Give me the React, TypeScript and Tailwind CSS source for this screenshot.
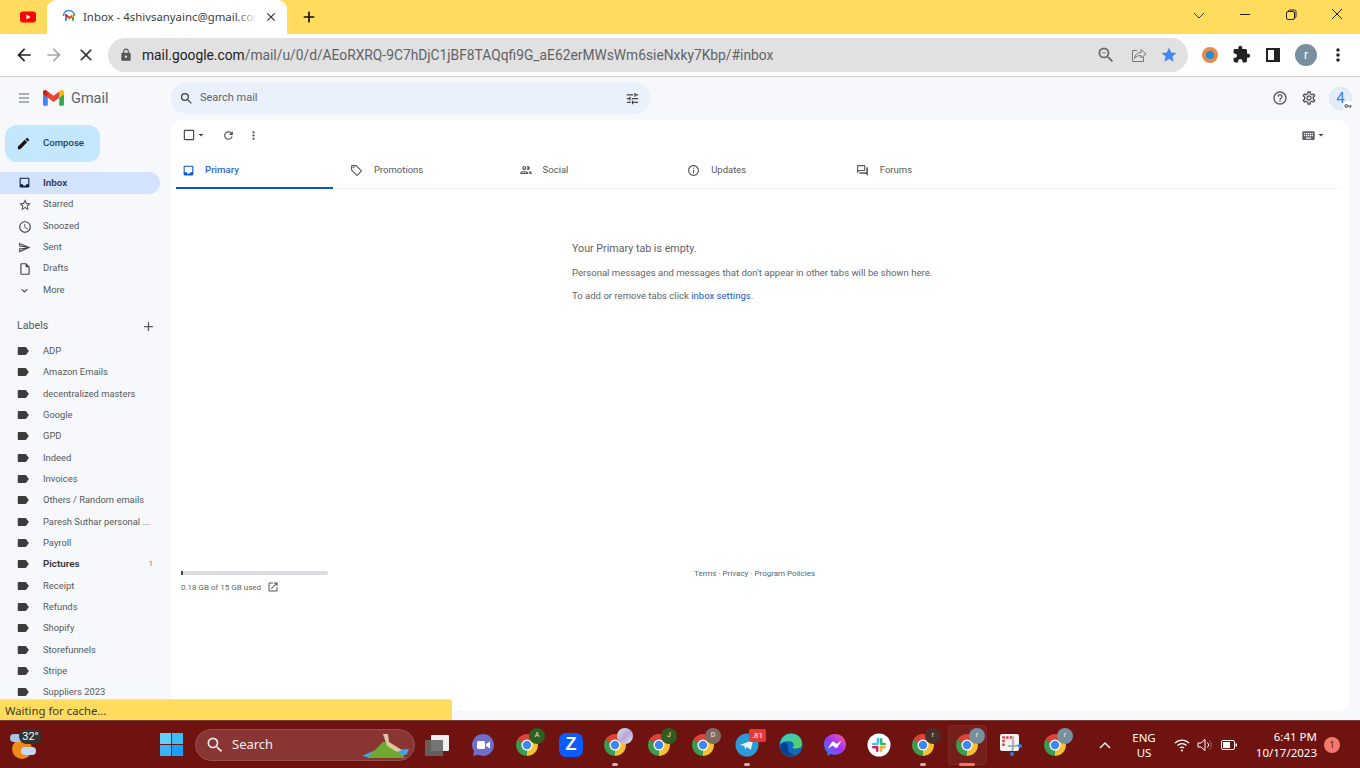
import { Menu, Plus } from "lucide-react";
import {
  MdAdd,
  MdArrowBack,
  MdArrowDropDown,
  MdArrowForward,
  MdClose,
  MdExpandMore,
  MdExtension,
  MdHelpOutline,
  MdInbox,
  MdInfoOutline,
  MdKeyboard,
  MdLabel,
  MdLock,
  MdMoreVert,
  MdOpenInNew,
  MdOutlineCheckBoxOutlineBlank,
  MdOutlineForum,
  MdOutlineInsertDriveFile,
  MdOutlineLocalOffer,
  MdOutlinePeople,
  MdOutlineSend,
  MdOutlineSettings,
  MdOutlineTune,
  MdAccessTime,
  MdRefresh,
  MdSearch,
  MdStar,
  MdStarBorder,
  MdVpnKey,
  MdZoomOut,
  MdCreate,
} from "react-icons/md";

function GmailLogo({ className }: { className: string }) {
  return (
    <svg viewBox="0 0 256 193" className={className}>
      <path fill="#4285F4" d="M58.18 192.05V93.14L27.5 65.08 0 49.5v125.1c0 9.65 7.82 17.45 17.45 17.45h40.73z" />
      <path fill="#34A853" d="M197.82 192.05h40.73c9.65 0 17.45-7.82 17.45-17.45V49.5l-31.16 17.84-27.02 25.8v98.91z" />
      <path fill="#EA4335" d="M58.18 93.14l-4.17-38.65 4.17-36.99L128 69.87l69.82-52.37 4.67 34.99-4.67 40.65L128 145.5z" />
      <path fill="#FBBC04" d="M197.82 17.5V93.14L256 49.5V26.23c0-21.59-24.64-33.89-41.89-20.95z" />
      <path fill="#C5221F" d="M0 49.5l26.76 20.07L58.18 93.14V17.5L41.89 5.28C24.61-7.66 0 4.64 0 26.23z" />
    </svg>
  );
}

function ChromeIcon({ badge, badgeBg }: { badge?: string; badgeBg?: string }) {
  return (
    <div className="relative w-6 h-6">
      <svg viewBox="0 0 48 48" className="w-6 h-6">
        <path fill="#db4437" d="M24 24 5 13A22 22 0 0 1 43 13Z" />
        <path fill="#fbc02d" d="M24 24 43 13A22 22 0 0 1 24 46Z" />
        <path fill="#3c9b4e" d="M24 24 24 46A22 22 0 0 1 5 13Z" />
        <circle cx="24" cy="24" r="11" fill="#fff" />
        <circle cx="24" cy="24" r="8.5" fill="#3f86f4" />
      </svg>
      {badge !== undefined && (
        <div
          className="absolute -top-[5px] -right-[6px] w-[16px] h-[16px] rounded-full flex items-center justify-center text-[7px] text-white/90"
          style={{ background: badgeBg }}
        >
          {badge}
        </div>
      )}
    </div>
  );
}

function Cell({ children, dot }: { children: React.ReactNode; dot?: boolean }) {
  return (
    <div className="relative w-[44px] h-[48px] flex items-center justify-center">
      {children}
      {dot && <div className="absolute bottom-[3px] left-[19px] w-[6px] h-[3px] rounded-full bg-[#c9b3b1]" />}
    </div>
  );
}

const folders = [
  { name: "Starred", icon: <MdStarBorder className="w-[14px] h-[14px]" /> },
  { name: "Snoozed", icon: <MdAccessTime className="w-[14px] h-[14px]" /> },
  { name: "Sent", icon: <MdOutlineSend className="w-[13px] h-[13px]" /> },
  { name: "Drafts", icon: <MdOutlineInsertDriveFile className="w-[14px] h-[14px]" /> },
  { name: "More", icon: <MdExpandMore className="w-[13px] h-[13px]" /> },
];

const labels = [
  "ADP",
  "Amazon Emails",
  "decentralized masters",
  "Google",
  "GPD",
  "Indeed",
  "Invoices",
  "Others / Random emails",
  "Paresh Suthar personal ...",
  "Payroll",
  "Pictures",
  "Receipt",
  "Refunds",
  "Shopify",
  "Storefunnels",
  "Stripe",
  "Suppliers 2023",
];

const tabs = [
  { name: "Promotions", icon: <MdOutlineLocalOffer className="w-[13px] h-[13px]" /> },
  { name: "Social", icon: <MdOutlinePeople className="w-[14px] h-[14px]" /> },
  { name: "Updates", icon: <MdInfoOutline className="w-[13px] h-[13px]" /> },
  { name: "Forums", icon: <MdOutlineForum className="w-[13px] h-[13px]" /> },
];

function Sidebar() {
  return (
    <aside className="w-[171px] shrink-0 text-[9.4px] text-[#55585a]">
      <div className="mt-[48px] ml-[5px] w-[95px] h-[37px] rounded-[12px] bg-[#c2e7ff] flex items-center text-[#2b3f50] font-medium">
        <MdCreate className="ml-[11px] w-[15px] h-[15px] text-[#111]" />
        <span className="ml-[12px] text-[9.6px]">Compose</span>
      </div>
      <div className="mt-[10.3px] w-[160px] h-[21.33px] rounded-r-full bg-[#d3e3fd] flex items-center font-semibold text-[9.8px] text-[#2c3a52]">
        <MdInbox className="ml-[18px] w-[13px] h-[13px] text-[#0b1f3d]" />
        <span className="ml-[12px]">Inbox</span>
      </div>
      {folders.map((f) => (
        <div key={f.name} className="h-[21.33px] flex items-center">
          <span className="w-[43px] flex justify-center pl-[6px] translate-y-[1px] text-[#444746]">{f.icon}</span>
          <span>{f.name}</span>
        </div>
      ))}
      <div className="mt-[16px] h-[20px] w-[160px] flex items-center justify-between pl-[17px] pr-[4px] text-[10.7px]">
        <span>Labels</span>
        <MdAdd className="w-[15px] h-[15px] text-[#555]" />
      </div>
      <div className="mt-[4.1px]">
        {labels.map((l) => (
          <div key={l} className={`h-[21.33px] w-[160px] flex items-center ${l === "Pictures" ? "font-semibold text-[9.8px] text-[#303134]" : ""}`}>
            <MdLabel className="ml-[16px] mr-[13px] w-[14px] h-[14px] text-[#3c3c3c]" />
            <span>{l}</span>
            {l === "Pictures" && <span className="ml-auto pr-[7px] font-normal text-[8px] text-[#777]">1</span>}
          </div>
        ))}
      </div>
    </aside>
  );
}

function MailPanel() {
  return (
    <main className="mt-[43px] mr-[11px] h-[591px] flex-1 rounded-xl bg-white text-[#55585a]">
      <div className="h-[32px] flex items-center pl-[11px] pr-[22px] pb-[2px] text-[#444746]">
        <MdOutlineCheckBoxOutlineBlank className="w-[14px] h-[14px]" />
        <MdArrowDropDown className="w-[12px] h-[12px] -ml-[1px]" />
        <MdRefresh className="ml-[15px] w-[13px] h-[13px]" />
        <MdMoreVert className="ml-[12px] w-[13px] h-[13px]" />
        <MdKeyboard className="ml-auto w-[15px] h-[15px] text-[#5f6368]" />
        <MdArrowDropDown className="w-[12px] h-[12px] -ml-[1px]" />
      </div>
      <div className="ml-[5px] mr-[9px] h-[37px] border-b border-[#f1f3f4] flex text-[9.5px]">
        <div className="w-[157px] h-[37px] border-b-2 border-[#0b57d0] flex items-center pt-[1px] text-[#2f66d4] font-medium text-[9.7px] shrink-0">
          <MdInbox className="ml-[6px] w-[13px] h-[13px] text-[#0b57d0]" />
          <span className="ml-[10px]">Primary</span>
        </div>
        <div className="w-[11px]" />
        {tabs.map((t) => (
          <div key={t.name} className="w-[168.6px] flex items-center pl-[6px]">
            <span className="w-[24px]">{t.icon}</span>
            <span>{t.name}</span>
          </div>
        ))}
      </div>
      <div className="pl-[401px] text-[#5f6368]">
        <p className="mt-[53px] h-[14px] leading-[14px] text-[10.7px]">Your Primary tab is empty.</p>
        <p className="mt-[11px] h-[12px] leading-[12px] text-[9.55px]">
          Personal messages and messages that don't appear in other tabs will be shown here.
        </p>
        <p className="mt-[11px] h-[12px] leading-[12px] text-[9.55px]">
          To add or remove tabs click <span className="text-[#1a56c4]">inbox settings</span>.
        </p>
      </div>
      <div className="mt-[269px] flex text-[8px] text-[#5f6368]">
        <div className="ml-[10px] w-[147px]">
          <div className="h-[4px] rounded-full bg-[#dadce0]">
            <div className="h-[4px] w-[2px] bg-[#444]" />
          </div>
          <div className="mt-[6px] flex items-center h-[12px] pt-[1px]">
            <span>0.18 GB of 15 GB used</span>
            <MdOpenInNew className="ml-[6px] -mt-[2px] w-[12px] h-[12px] text-[#555]" />
          </div>
        </div>
        <div className="ml-[366px] -mt-[3px] text-[#4a6a80]">Terms · Privacy · Program Policies</div>
      </div>
    </main>
  );
}

function Taskbar() {
  return (
    <footer className="h-[48px] bg-[#6e1310] flex items-center shrink-0 border-t border-[#7c3a37] text-white">
      <Cell>
        <div className="relative w-[26px] h-[26px] translate-x-[1px]">
          <div className="absolute left-[2px] top-[7px] w-[20px] h-[20px] rounded-full bg-[#ee8a1c]" />
          <div className="absolute left-[0px] top-[2px] w-[12px] h-[8px] rounded-full bg-[#a9c4ea]" />
          <div className="absolute left-[11px] top-[15px] w-[15px] h-[8px] rounded-full bg-[#c4d8f2]" />
          <div className="absolute left-[9px] -top-[3px] w-[23px] h-[15px] rounded-full bg-[#333] text-[11px] leading-[15px] text-center">32°</div>
        </div>
      </Cell>
      <div className="ml-[105px] w-[44px] flex justify-center">
        <div className="grid grid-cols-2 gap-[1px] w-[23px] h-[23px]">
          <div className="bg-[#5fd0f7]" />
          <div className="bg-[#3cbdf5]" />
          <div className="bg-[#38b4f5]" />
          <div className="bg-[#1aa0f5]" />
        </div>
      </div>
      <div className="relative ml-[2px] w-[220px] h-[32px] rounded-full bg-[#883534] border border-[#96504e] flex items-center overflow-hidden text-[#eee] text-[13px]" style={{ fontFamily: "'Noto Sans', sans-serif" }}>
        <MdSearch className="ml-[9px] w-[20px] h-[20px]" />
        <span className="ml-[7px]">Search</span>
        <svg viewBox="0 0 50 26" className="absolute right-[3px] bottom-0 w-[50px] h-[26px]">
          <path fill="#3fa5e8" d="M1 22 12 17 18 22 12 24Z" />
          <path fill="#3fa5e8" d="M33 16 48 15 46 20 38 24Z" />
          <path fill="#6fa92e" d="M6 24 22 8 26 8 44 24Z" />
          <path fill="#d8c9a4" d="M22 0 27 0 28 8 41 16 36 18 26 12Z" />
        </svg>
      </div>
      <Cell>
        <div className="relative w-[24px] h-[16px]">
          <div className="absolute right-0 -top-[2px] w-[18px] h-[16px] rounded-[1px] bg-[#efefef]" />
          <div className="absolute left-0 top-[3px] w-[18px] h-[16px] rounded-[1px] bg-[#666]/90" />
        </div>
      </Cell>
      <div className="ml-[1px] flex translate-x-[1px]">
        <Cell>
          <svg viewBox="0 0 24 24" className="w-[24px] h-[24px]">
            <path fill="#6f6fc9" d="M12 1a11 11 0 1 1-5 20.8L2 23l1-4.8A11 11 0 0 1 12 1Z" />
            <rect x="6" y="8" width="8" height="8" rx="1.5" fill="#fff" />
            <path fill="#fff" d="m15 11 4-2.5v7L15 13Z" />
          </svg>
        </Cell>
        <Cell><ChromeIcon badge="A" badgeBg="#2f5f1f" /></Cell>
        <Cell>
          <div className="w-[24px] h-[24px] rounded-[7px] bg-[#0b5cff] flex items-center justify-center text-[18px] font-bold text-white" style={{ fontFamily: "'Liberation Sans', sans-serif" }}>Z</div>
        </Cell>
        <Cell dot><ChromeIcon badge="" badgeBg="linear-gradient(135deg,#d8eee0,#b9a6d8,#e5e5e5)" /></Cell>
        <Cell><ChromeIcon badge="J" badgeBg="#2f5f1f" /></Cell>
        <Cell><ChromeIcon badge="D" badgeBg="#7d6a60" /></Cell>
        <Cell dot>
          <div className="relative w-[24px] h-[24px]">
            <svg viewBox="0 0 24 24" className="w-[24px] h-[24px]">
              <circle cx="12" cy="12" r="11.5" fill="#2a9bd6" />
              <path fill="#e8f3fa" d="M5 12 18 7l-2 10-4-3-2 2.5-.5-3.5Z" />
            </svg>
            <div className="absolute -top-[4px] -right-[7px] px-[3px] h-[13px] rounded-[2px] bg-[#e53935] text-[8px] leading-[13px]">.81</div>
          </div>
        </Cell>
        <Cell>
          <svg viewBox="0 0 24 24" className="w-[24px] h-[24px]">
            <defs>
              <linearGradient id="edgeA" x1="0" y1="0" x2="1" y2="1">
                <stop offset="0" stopColor="#37c6d0" />
                <stop offset="1" stopColor="#5ad45a" />
              </linearGradient>
            </defs>
            <circle cx="12" cy="12" r="11.5" fill="#0f6cbd" />
            <path fill="url(#edgeA)" d="M1 11C2 4 7 .5 12 .5c6 0 11 4 11 10.500 0 3-3 4.500-6 4.500-2 0-3.500-.5-3.500-1 2-1 2-6-3-6.500C6 8 3 9 1 11Z" />
            <path fill="#0a3f8f" d="M9 15c0 4 4 7 8 6.500-6 3-13 1-15.500-6C1 12 3 10 5 9.500 7.500 9 9 11.500 9 15Z" />
          </svg>
        </Cell>
        <Cell>
          <svg viewBox="0 0 24 24" className="w-[24px] h-[24px]">
            <defs>
              <linearGradient id="msgA" x1="0" y1="1" x2="1" y2="0">
                <stop offset="0" stopColor="#1a8cff" />
                <stop offset="0.5" stopColor="#a033ff" />
                <stop offset="1" stopColor="#ff5c87" />
              </linearGradient>
            </defs>
            <path fill="url(#msgA)" d="M12 1C5.800 1 1 5.500 1 11.500c0 3.200 1.300 5.900 3.500 7.700V23l3.400-1.900c1.300.4 2.600.6 4.100.6 6.200 0 11-4.500 11-10.200S18.200 1 12 1Z" />
            <path fill="#fff" d="m5.500 14.500 3.300-5.200c.5-.8 1.600-1 2.400-.4l2.600 2 3.300-2.500c.4-.3 1 .2.700.6l-3.300 5.200c-.5.800-1.600 1-2.400.4l-2.600-2-3.300 2.500c-.4.300-1-.2-.7-.6Z" />
          </svg>
        </Cell>
        <Cell>
          <svg viewBox="0 0 24 24" className="w-[24px] h-[24px]">
            <circle cx="12" cy="12" r="11.500" fill="#fff" />
            <rect x="9.800" y="4.500" width="2.400" height="6" rx="1.200" fill="#36c5f0" />
            <rect x="5" y="9.800" width="6.500" height="2.400" rx="1.200" fill="#36c5f0" />
            <rect x="13" y="5" width="2.400" height="6.500" rx="1.200" fill="#2eb67d" />
            <rect x="13" y="9.800" width="6" height="2.400" rx="1.200" fill="#2eb67d" />
            <rect x="12.800" y="13" width="6.200" height="2.400" rx="1.200" fill="#ecb22e" />
            <rect x="12.800" y="13" width="2.400" height="6" rx="1.200" fill="#ecb22e" />
            <rect x="9" y="13" width="2.400" height="6" rx="1.200" fill="#e01e5a" />
            <rect x="5" y="13" width="6.400" height="2.400" rx="1.200" fill="#e01e5a" />
          </svg>
        </Cell>
        <Cell dot><ChromeIcon badge="r" badgeBg="#4a2f2a" /></Cell>
        <div className="relative w-[44px] h-[48px] flex items-center justify-center">
          <div className="absolute left-[3px] top-[4px] w-[39px] h-[40px] rounded-[4px] bg-white/5 border border-white/5" />
          <div className="relative"><ChromeIcon badge="r" badgeBg="#78909c" /></div>
          <div className="absolute bottom-[3px] left-[14px] w-[16px] h-[3px] rounded-full bg-[#f0795f]" />
        </div>
        <Cell>
          <svg viewBox="0 0 24 24" className="w-[24px] h-[24px]">
            <rect x="1" y="1" width="19" height="17" rx="2" fill="#f2f2f2" />
            <path stroke="#d9453a" strokeWidth="2.500" strokeDasharray="2.500 1.200" fill="none" d="M4.500 13V4.500H15" />
            <path stroke="#9a9a9a" strokeWidth="1.500" d="M14 6v9l-1 3M9 13h8l3-1" fill="none" />
            <circle cx="21" cy="13" r="2" fill="#1e88e5" />
            <circle cx="13" cy="21" r="2" fill="#1e88e5" />
          </svg>
        </Cell>
        <Cell><ChromeIcon badge="r" badgeBg="#78909c" /></Cell>
      </div>
      <div className="flex-1 flex items-center text-[12px] text-white" style={{ fontFamily: "'Noto Sans', sans-serif" }}>
        <svg viewBox="0 0 12 8" className="ml-[23px] w-[12px] h-[8px]" fill="none" stroke="#fff" strokeWidth="1.400">
          <path d="M1 7 6 2l5 5" />
        </svg>
        <div className="ml-[18px] w-[30px] text-center text-[11.500px] leading-[15px]">ENG<br />US</div>
        <svg viewBox="0 0 16 14" className="ml-[15px] w-[16px] h-[14px]" fill="none" stroke="#fff" strokeWidth="1.300">
          <path d="M1 5a10 10 0 0 1 14 0M3.500 7.500a6.500 6.500 0 0 1 9 0M6 10a3 3 0 0 1 4 0" />
          <circle cx="8" cy="12.500" r="1" fill="#fff" stroke="none" />
        </svg>
        <svg viewBox="0 0 16 14" className="ml-[7px] w-[16px] h-[14px]" fill="none" stroke="#fff" strokeWidth="1">
          <path d="M1 5h3l4-3.500v11L4 9H1Z" />
          <path d="M10.500 4.500a3.500 3.500 0 0 1 0 5" />
          <path d="M12.500 2.500a6.500 6.500 0 0 1 0 9" stroke="#a06a66" />
        </svg>
        <svg viewBox="0 0 16 10" className="ml-[8px] w-[16px] h-[10px]" fill="none" stroke="#fff" strokeWidth="1">
          <rect x="0.500" y="0.500" width="13" height="9" rx="1.500" />
          <rect x="2" y="2" width="7" height="6" fill="#fff" stroke="none" />
          <rect x="14.500" y="3.500" width="1.500" height="3" fill="#fff" stroke="none" />
        </svg>
        <div className="ml-[14px] w-[66px] text-right text-[11.500px] leading-[16px] whitespace-nowrap">6:41 PM<br />10/17/2023</div>
        <div className="ml-[7px] w-[16px] h-[16px] rounded-full bg-[#f0796a] text-[#5a1210] text-[9px] leading-[16px] text-center">1</div>
      </div>
    </footer>
  );
}

export default function App() {
  return (
    <div className="relative w-[1360px] h-[768px] overflow-hidden flex flex-col bg-[#f6f8fc]" style={{ fontFamily: "Roboto, sans-serif" }}>
      {/* browser tab strip */}
      <div className="h-[34px] bg-[#ffdc5e] flex shrink-0 text-[#222]">
        <div className="w-[47px] flex items-center justify-center pl-[9px] pb-[1px]">
          <svg viewBox="0 0 16 12" className="w-[16px] h-[12px]">
            <rect width="16" height="11" y="0.500" rx="3" fill="#f00" />
            <path fill="#fff" d="m6.400 3.500 4.200 2.500-4.200 2.500Z" />
          </svg>
        </div>
        <div className="relative w-[240px] h-[34px] rounded-t-[9px] bg-white flex items-center">
          <div className="relative ml-[15px] w-[14px] h-[14px] flex items-center justify-center">
            <GmailLogo className="w-[9px] h-[7px]" />
            <svg viewBox="0 0 14 14" className="absolute inset-0 w-[14px] h-[14px]" fill="none" stroke="#4285f4" strokeWidth="1.400">
              <path d="M1.500 6A5.500 5.500 0 0 1 12.500 6" />
            </svg>
          </div>
          <div className="ml-[7px] w-[172px] overflow-hidden whitespace-nowrap text-[11.4px] text-[#3c4043]" style={{ fontFamily: "'Noto Sans', sans-serif" }}>
            Inbox - 4shivsanyainc@gmail.com
          </div>
          <div className="absolute left-[190px] top-0 w-[20px] h-[34px] bg-gradient-to-r from-transparent to-white" />
          <MdClose className="absolute right-[9px] top-[10px] w-[14px] h-[14px] text-[#333]" />
        </div>
        <Plus className="ml-[14px] mt-[9px] w-[16px] h-[16px] text-[#111]" strokeWidth={2.5} />
        <div className="ml-auto flex text-[#333]">
          <div className="w-[46px] flex justify-center pt-[9px]">
            <svg viewBox="0 0 12 12" className="w-[12px] h-[12px]" fill="none" stroke="#333"><path d="m1 4 5 5 5-5" /></svg>
          </div>
          <div className="w-[46px] flex justify-center pt-[9px]">
            <svg viewBox="0 0 12 12" className="w-[12px] h-[12px]" fill="none" stroke="#222"><path d="M1 5.500h10" /></svg>
          </div>
          <div className="w-[46px] flex justify-center pt-[9px]">
            <svg viewBox="0 0 12 12" className="w-[12px] h-[12px]" fill="none" stroke="#222">
              <rect x="1.500" y="2.500" width="8" height="8" rx="1.500" />
              <path d="M3.500 2.500v-.5a1 1 0 0 1 1-1h5a1.500 1.500 0 0 1 1.500 1.500v5a1 1 0 0 1-1 1h-.5" />
            </svg>
          </div>
          <div className="w-[46px] flex justify-center pt-[8px]">
            <svg viewBox="0 0 12 12" className="w-[12px] h-[12px]" fill="none" stroke="#222"><path d="m1 1 10 10M11 1 1 11" /></svg>
          </div>
        </div>
      </div>

      {/* address bar */}
      <div className="h-[43px] bg-white border-b border-[#cfcfcf] flex items-center shrink-0 pb-[1px]">
        <MdArrowBack className="ml-[14px] w-[20px] h-[20px] text-[#222]" />
        <MdArrowForward className="ml-[10px] w-[20px] h-[20px] text-[#a8a8a8]" />
        <MdClose className="ml-[12px] w-[20px] h-[20px] text-[#333]" />
        <div className="ml-[12px] w-[1080px] h-[34px] rounded-full bg-[#e1e1e1] flex items-center text-[13.8px] text-[#5f6368] shrink-0">
          <MdLock className="ml-[11px] w-[14px] h-[14px] text-[#555]" />
          <span className="ml-[9px] pt-[1px] whitespace-nowrap">
            <span className="text-[#202124]">mail.google.com</span>/mail/u/0/d/AEoRXRQ-9C7hDjC1jBF8TAQqfi9G_aE62erMWsWm6sieNxky7Kbp/#inbox
          </span>
          <div className="ml-auto flex items-center pr-[10px]">
            <MdZoomOut className="w-[20px] h-[20px] text-[#666]" />
            <svg viewBox="0 0 16 16" className="ml-[15px] w-[16px] h-[16px]" fill="none" stroke="#777" strokeWidth="1">
              <path d="M6 3.500H1.500v11h11V10" />
              <path d="M3.500 11.500C4 7.500 6.500 5.500 10 5.500V2.500l5 4.500-5 4V8.500c-3 0-5 1-6.500 3Z" />
            </svg>
            <MdStar className="ml-[13px] w-[18px] h-[18px] text-[#4285f4]" />
          </div>
        </div>
        <div className="ml-[14px] w-[16px] h-[16px] rounded-full bg-[#e88a4a] flex items-center justify-center shrink-0">
          <div className="w-[8px] h-[8px] rounded-full bg-[#1d8fd8]" />
        </div>
        <MdExtension className="ml-[14px] w-[19px] h-[19px] text-[#222] shrink-0" />
        <div className="ml-[15px] w-[14px] h-[14px] bg-white border-2 border-[#222] border-r-[6px] shrink-0" />
        <div className="ml-[15px] w-[22px] h-[22px] rounded-full bg-[#78909c] text-white text-[12px] leading-[22px] text-center shrink-0">r</div>
        <MdMoreVert className="ml-[11px] w-[20px] h-[20px] text-[#222] shrink-0" />
      </div>

      {/* gmail */}
      <div className="relative flex-1 flex overflow-hidden">
        <Sidebar />
        <MailPanel />
        {/* gmail top bar sits over the columns */}
        <div className="absolute left-0 top-0 w-full h-[42px] flex items-center">
          <Menu className="ml-[17px] w-[14px] h-[14px] text-[#5f6368]" strokeWidth={1.75} />
          <GmailLogo className="ml-[12px] w-[21px] h-[16px]" />
          <span className="ml-[7px] pt-[2px] w-[100px] shrink-0 text-[14.500px] text-[#5f6368]">Gmail</span>
          <div className="w-[480px] h-[32px] rounded-full bg-[#eaf1fb] flex items-center text-[11px] text-[#5f6368] shrink-0">
            <MdSearch className="ml-[8px] w-[15px] h-[15px] text-[#444]" />
            <span className="ml-[6px]">Search mail</span>
            <MdOutlineTune className="ml-auto mr-[11px] w-[15px] h-[15px] text-[#444]" />
          </div>
          <div className="ml-auto flex items-center pr-[8px] text-[#555]">
            <MdHelpOutline className="w-[16px] h-[16px]" />
            <MdOutlineSettings className="ml-[13px] w-[16px] h-[16px]" />
            <div className="relative ml-[12px] w-[23px] h-[23px] rounded-full bg-[#e3ecf9] border border-[#d9e4f6] text-[#3f7fe8] text-[15px] leading-[21px] text-center">
              4
              <div className="absolute -right-[2px] -bottom-[2px] w-[10px] h-[10px] rounded-full bg-white flex items-center justify-center">
                <MdVpnKey className="w-[8px] h-[8px] text-[#777]" />
              </div>
            </div>
          </div>
        </div>
      </div>

      {/* chrome status bubble */}
      <div className="absolute left-0 top-[699px] w-[452px] h-[21px] rounded-tr-[3px] bg-[#ffdc5e] pl-[5px] text-[11.3px] leading-[21px] text-[#3c3c2a] border-t border-[#e0e0e0]" style={{ fontFamily: "'Noto Sans', sans-serif" }}>
        Waiting for cache...
      </div>

      <Taskbar />
    </div>
  );
}
